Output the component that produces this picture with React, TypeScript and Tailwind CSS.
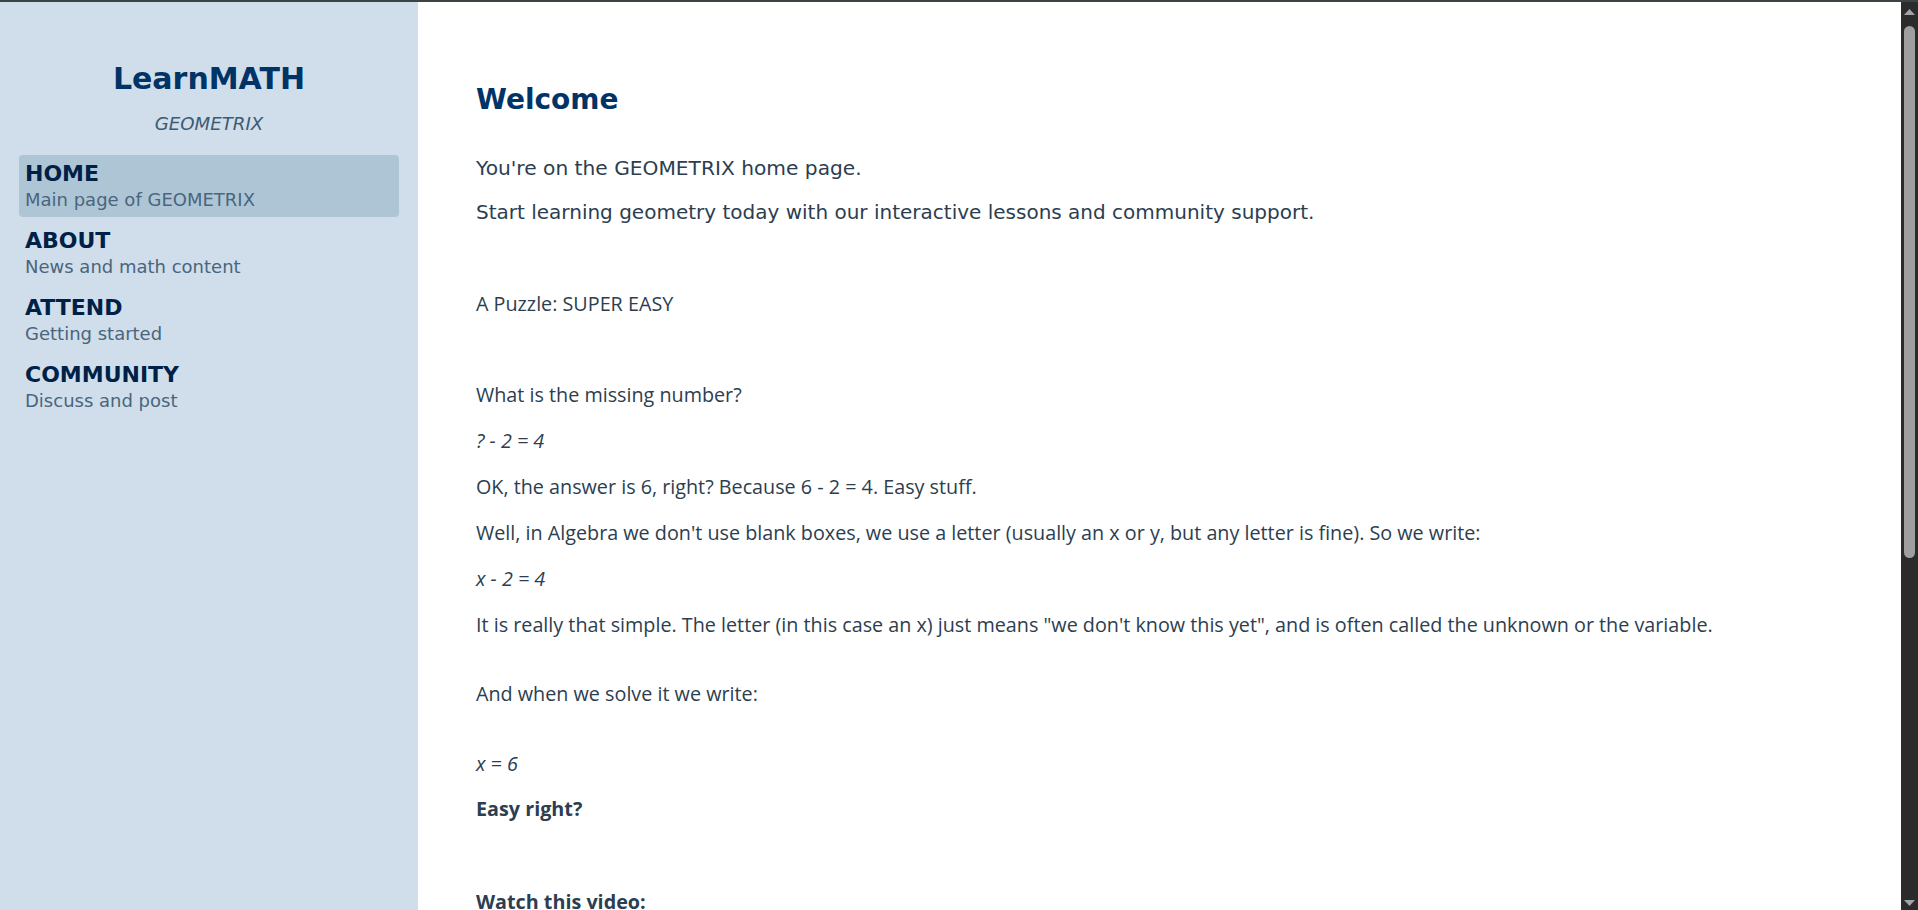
import React from 'react';

const nav = [
  { t: 'HOME', s: 'Main page of GEOMETRIX', active: true },
  { t: 'ABOUT', s: 'News and math content', active: false },
  { t: 'ATTEND', s: 'Getting started', active: false },
  { t: 'COMMUNITY', s: 'Discuss and post', active: false },
];

function ScrollBar() {
  return (
    <div className="flex w-[17px] shrink-0 flex-col items-center bg-[#2b2b2b]">
      <svg width="11" height="6" viewBox="0 0 11 6" className="mt-[7px] shrink-0">
        <path d="M5.5 0 L11 6 L0 6 Z" fill="#a3a3a3" />
      </svg>
      <div className="mt-[11px] h-[532px] w-[11px] shrink-0 rounded-full bg-[#9f9f9f]" />
      <div className="flex-1" />
      <svg width="11" height="6" viewBox="0 0 11 6" className="mb-[4px] shrink-0">
        <path d="M0 0 L11 0 L5.5 6 Z" fill="#a3a3a3" />
      </svg>
    </div>
  );
}

export default function App() {
  return (
    <div className="flex h-screen flex-col bg-white">
      <div className="h-[2px] shrink-0 bg-[#3b4346]" />
      <div className="flex min-h-0 flex-1">
        <div className="min-w-0 flex-1 overflow-y-auto [scrollbar-width:none]">
          <div className="flex min-h-full">
            <aside className="w-[418px] shrink-0 bg-[#cfdeea] px-[19px] pt-[59px] font-['DejaVu_Sans',sans-serif]">
              <h1 className="text-center text-[30px] font-bold leading-[36px] text-[#003366]">LearnMATH</h1>
              <p className="mt-[15px] text-center text-[18.2px] italic leading-[24px] text-[#3d5a73]">GEOMETRIX</p>
              <nav className="mt-[19px] flex flex-col gap-[5px]">
                {nav.map((n) => (
                  <div
                    key={n.t}
                    className={
                      n.active
                        ? 'rounded-[4px] bg-[#aec5d6] px-[6px] pt-[6px] pb-[4px]'
                        : 'rounded-[4px] px-[6px] pt-[6px] pb-[4px]'
                    }
                  >
                    <div className="text-[22px] font-bold leading-[26px] text-[#002147]">{n.t}</div>
                    <div className="text-[18px] leading-[26px] text-[#4a657d]">{n.s}</div>
                  </div>
                ))}
              </nav>
            </aside>
            <main className="flex-1 pl-[58px] pt-[81px] pb-[566px] text-[#2c3e50]">
              <div className="font-['DejaVu_Sans',sans-serif]">
                <h2 className="text-[28px] font-bold leading-[34px] text-[#003366]">Welcome</h2>
                <p className="mt-[36px] text-[20.2px] leading-[30px]">You're on the GEOMETRIX home page.</p>
                <p className="mt-[14px] text-[20px] leading-[30px]">
                  Start learning geometry today with our interactive lessons and community support.
                </p>
              </div>
              <div className="font-['Open_Sans',sans-serif] text-[19.75px] leading-[28px]">
                <p className="mt-[63px]">A Puzzle: SUPER EASY</p>
                <p className="mt-[63px]">What is the missing number?</p>
                <p className="mt-[18px] italic">? - 2 = 4</p>
                <p className="mt-[18px]">OK, the answer is 6, right? Because 6 - 2 = 4. Easy stuff.</p>
                <p className="mt-[18px]">
                  Well, in Algebra we don't use blank boxes, we use a letter (usually an x or y, but any letter is fine). So we write:
                </p>
                <p className="mt-[18px] italic">x - 2 = 4</p>
                <p className="mt-[18px]">
                  It is really that simple. The letter (in this case an x) just means "we don't know this yet", and is often called the unknown or the variable.
                </p>
                <p className="mt-[41px]">And when we solve it we write:</p>
                <p className="mt-[42px] italic">x = 6</p>
                <p className="mt-[17px] font-bold">Easy right?</p>
                <p className="mt-[65px] font-bold">Watch this video:</p>
              </div>
            </main>
          </div>
        </div>
        <ScrollBar />
      </div>
    </div>
  );
}
